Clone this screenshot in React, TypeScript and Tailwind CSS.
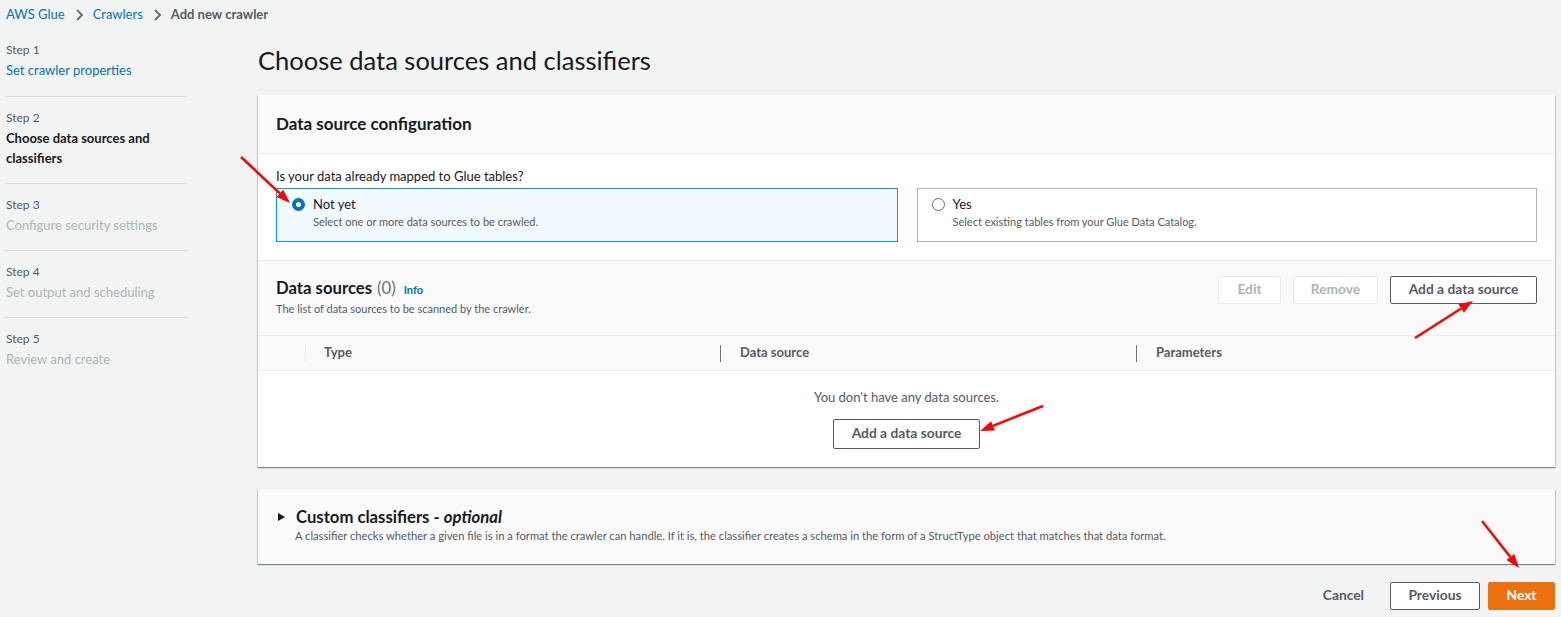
import React from "react";

const font = { fontFamily: "Lato, 'Open Sans', sans-serif" };

function Chevron() {
  return (
    <svg width="16" height="16" viewBox="0 0 16 16" className="mx-[6px]">
      <path d="M6 3l5 5-5 5" fill="none" stroke="#687078" strokeWidth="2" />
    </svg>
  );
}

function Arrow({ x1, y1, x2, y2 }: { x1: number; y1: number; x2: number; y2: number }) {
  const ang = Math.atan2(y2 - y1, x2 - x1);
  const L = 14;
  const W = 5;
  const bx = x2 - L * Math.cos(ang);
  const by = y2 - L * Math.sin(ang);
  const px = -Math.sin(ang) * W;
  const py = Math.cos(ang) * W;
  return (
    <g>
      <line x1={x1} y1={y1} x2={bx} y2={by} stroke="#ff0000" strokeWidth="2.5" />
      <polygon points={`${x2},${y2} ${bx + px},${by + py} ${bx - px},${by - py}`} fill="#ff0000" />
    </g>
  );
}

function NavStep({ step, title, state, first }: { step: string; title: React.ReactNode; state: "done" | "active" | "todo"; first?: boolean }) {
  const titleCls =
    state === "done"
      ? "text-[#0073bb]"
      : state === "active"
      ? "text-[#16191f] font-bold"
      : "text-[#aab7b8]";
  return (
    <div className={`${first ? "pt-[11px] pb-[16px]" : "pt-[11px] pb-[15px] border-t border-[#d5dbdb]"}`}>
      <div className="text-[12px] leading-[20px] text-[#545b64]">{step}</div>
      <div className={`text-[13px] leading-[20px] ${titleCls}`}>{title}</div>
    </div>
  );
}

function Btn({ children, disabled, className = "" }: { children: React.ReactNode; disabled?: boolean; className?: string }) {
  return (
    <div
      className={`h-[28px] flex items-center justify-center border text-[13.8px] font-bold rounded-[2px] bg-white pb-[2px] ${
        disabled ? "border-[#eaeded] text-[#aab7b8]" : "border-[#545b64] text-[#545b64]"
      } ${className}`}
    >
      {children}
    </div>
  );
}

const shadow =
  "shadow-[0_1px_1px_0_rgba(0,28,36,0.3),1px_1px_1px_0_rgba(0,28,36,0.15),-1px_1px_1px_0_rgba(0,28,36,0.15)]";

export default function App() {
  return (
    <div className="relative w-[1561px] h-[617px] bg-[#f2f3f3] overflow-hidden text-[#16191f]" style={font}>
      {/* Breadcrumb */}
      <div className="h-[29px] flex items-center pl-[6px] text-[13px]">
        <span className="text-[#0073bb]">AWS Glue</span>
        <Chevron />
        <span className="text-[#0073bb]">Crawlers</span>
        <Chevron />
        <span className="text-[#545b64] font-bold">Add new crawler</span>
      </div>

      <div className="flex">
        {/* Left nav */}
        <nav className="w-[186px] pl-[6px] shrink-0">
          <NavStep first step="Step 1" title="Set crawler properties" state="done" />
          <NavStep step="Step 2" title={<>Choose data sources and<br />classifiers</>} state="active" />
          <NavStep step="Step 3" title="Configure security settings" state="todo" />
          <NavStep step="Step 4" title="Set output and scheduling" state="todo" />
          <div className="pt-[11px] border-t border-[#d5dbdb]">
            <div className="text-[12px] leading-[20px] text-[#545b64]">Step 5</div>
            <div className="text-[13px] leading-[20px] text-[#aab7b8]">Review and create</div>
          </div>
        </nav>

        {/* Main */}
        <main className="ml-[72px] w-[1297px] pt-[15px]">
          <h1 className="text-[25.5px] leading-[32px] text-[#16191f] mb-[19px]">Choose data sources and classifiers</h1>

          {/* Panel 1 */}
          <section className={`bg-white ${shadow}`}>
            <div className="h-[59px] bg-[#fafafa] border-b border-[#eaeded] flex items-center px-[18px]">
              <h2 className="text-[17px] font-bold">Data source configuration</h2>
            </div>
            <div className="px-[18px] pt-[12px] pb-[18px] border-b border-[#eaeded]">
              <div className="text-[13px] leading-[20px] mb-[2px]">Is your data already mapped to Glue tables?</div>
              <div className="flex gap-[19px]">
                <div className="flex-1 h-[54px] border border-[#00a1c9] bg-[#f1faff] flex pl-[15px] pt-[5px]">
                  <div className="w-[13px] h-[13px] rounded-full border-[4px] border-[#0073bb] bg-white mt-[4px] mr-[8px]" />
                  <div>
                    <div className="text-[13px] leading-[20px]">Not yet</div>
                    <div className="text-[11px] leading-[16px] text-[#545b64]">Select one or more data sources to be crawled.</div>
                  </div>
                </div>
                <div className="flex-1 h-[54px] border border-[#aab7b8] bg-white flex pl-[14px] pt-[5px]">
                  <div className="w-[13px] h-[13px] rounded-full border border-[#687078] bg-white mt-[4px] mr-[8px]" />
                  <div>
                    <div className="text-[13px] leading-[20px]">Yes</div>
                    <div className="text-[11px] leading-[16px] text-[#545b64]">Select existing tables from your Glue Data Catalog.</div>
                  </div>
                </div>
              </div>
            </div>

            {/* Data sources */}
            <div className="bg-[#fafafa] h-[75px] flex items-start justify-between px-[18px] pt-[15px] border-b border-[#eaeded]">
              <div>
                <div className="flex items-baseline">
                  <span className="text-[16.7px] font-bold leading-[24px]">Data sources</span>
                  <span className="text-[16.7px] text-[#687078] ml-[5px] leading-[24px]">(0)</span>
                  <span className="text-[11px] font-bold text-[#0073bb] ml-[8px]">Info</span>
                </div>
                <div className="text-[11px] leading-[16px] text-[#545b64] mt-[1px]">The list of data sources to be scanned by the crawler.</div>
              </div>
              <div className="flex gap-[12px]">
                <Btn disabled className="w-[63px]">Edit</Btn>
                <Btn disabled className="w-[85px]">Remove</Btn>
                <Btn className="w-[147px]">Add a data source</Btn>
              </div>
            </div>
            <div className="h-[35px] bg-[#fafafa] border-b border-[#eaeded] flex items-center text-[13px] font-bold text-[#545b64]">
              <div className="w-[48px] flex justify-end"><div className="w-px h-[17px] bg-[#eaeded]" /></div>
              <div className="w-[415px] pl-[18px] flex justify-between items-center">
                <span>Type</span>
                <div className="w-px h-[17px] bg-[#687078]" />
              </div>
              <div className="w-[416px] pl-[19px] flex justify-between items-center">
                <span>Data source</span>
                <div className="w-px h-[17px] bg-[#687078]" />
              </div>
              <div className="pl-[19px]">Parameters</div>
            </div>
            <div className="h-[96px] flex flex-col items-center pt-[16px]">
              <div className="text-[13px] leading-[20px] text-[#545b64]">You don't have any data sources.</div>
              <Btn className="w-[147px] h-[30px] mt-[12px]">Add a data source</Btn>
            </div>
          </section>

          {/* Panel 2 */}
          <section className={`mt-[22px] h-[75px] bg-[#fafafa] ${shadow} px-[18px] pt-[17px]`}>
            <div className="flex items-center">
              <svg width="10" height="10" viewBox="0 0 10 10" className="mr-[9px] ml-[1px]">
                <path d="M1 1l7 4-7 4z" fill="#16191f" />
              </svg>
              <span className="text-[16.7px] font-bold leading-[22px]">Custom classifiers - <i>optional</i></span>
            </div>
            <div className="text-[11.2px] leading-[16px] text-[#545b64] pl-[19px]">
              A classifier checks whether a given file is in a format the crawler can handle. If it is, the classifier creates a schema in the form of a StructType object that matches that data format.
            </div>
          </section>

          {/* Footer */}
          <div className="flex justify-end items-center mt-[18px] gap-[8px]">
            <span className="text-[13.8px] font-bold text-[#545b64] mr-[18px] pb-[2px]">Cancel</span>
            <Btn className="w-[90px]">Previous</Btn>
            <div className="w-[67px] h-[28px] flex items-center justify-center bg-[#ec7211] text-white text-[13.8px] font-bold rounded-[2px] pb-[2px]">Next</div>
          </div>
        </main>
      </div>

      {/* Annotation arrows */}
      <svg className="absolute inset-0 pointer-events-none" width="1561" height="617">
        <Arrow x1={241} y1={157} x2={290} y2={203} />
        <Arrow x1={1415} y1={338} x2={1473} y2={301} />
        <Arrow x1={1043} y1={406} x2={980} y2={431} />
        <Arrow x1={1482} y1={521} x2={1519} y2={568} />
      </svg>
    </div>
  );
}
